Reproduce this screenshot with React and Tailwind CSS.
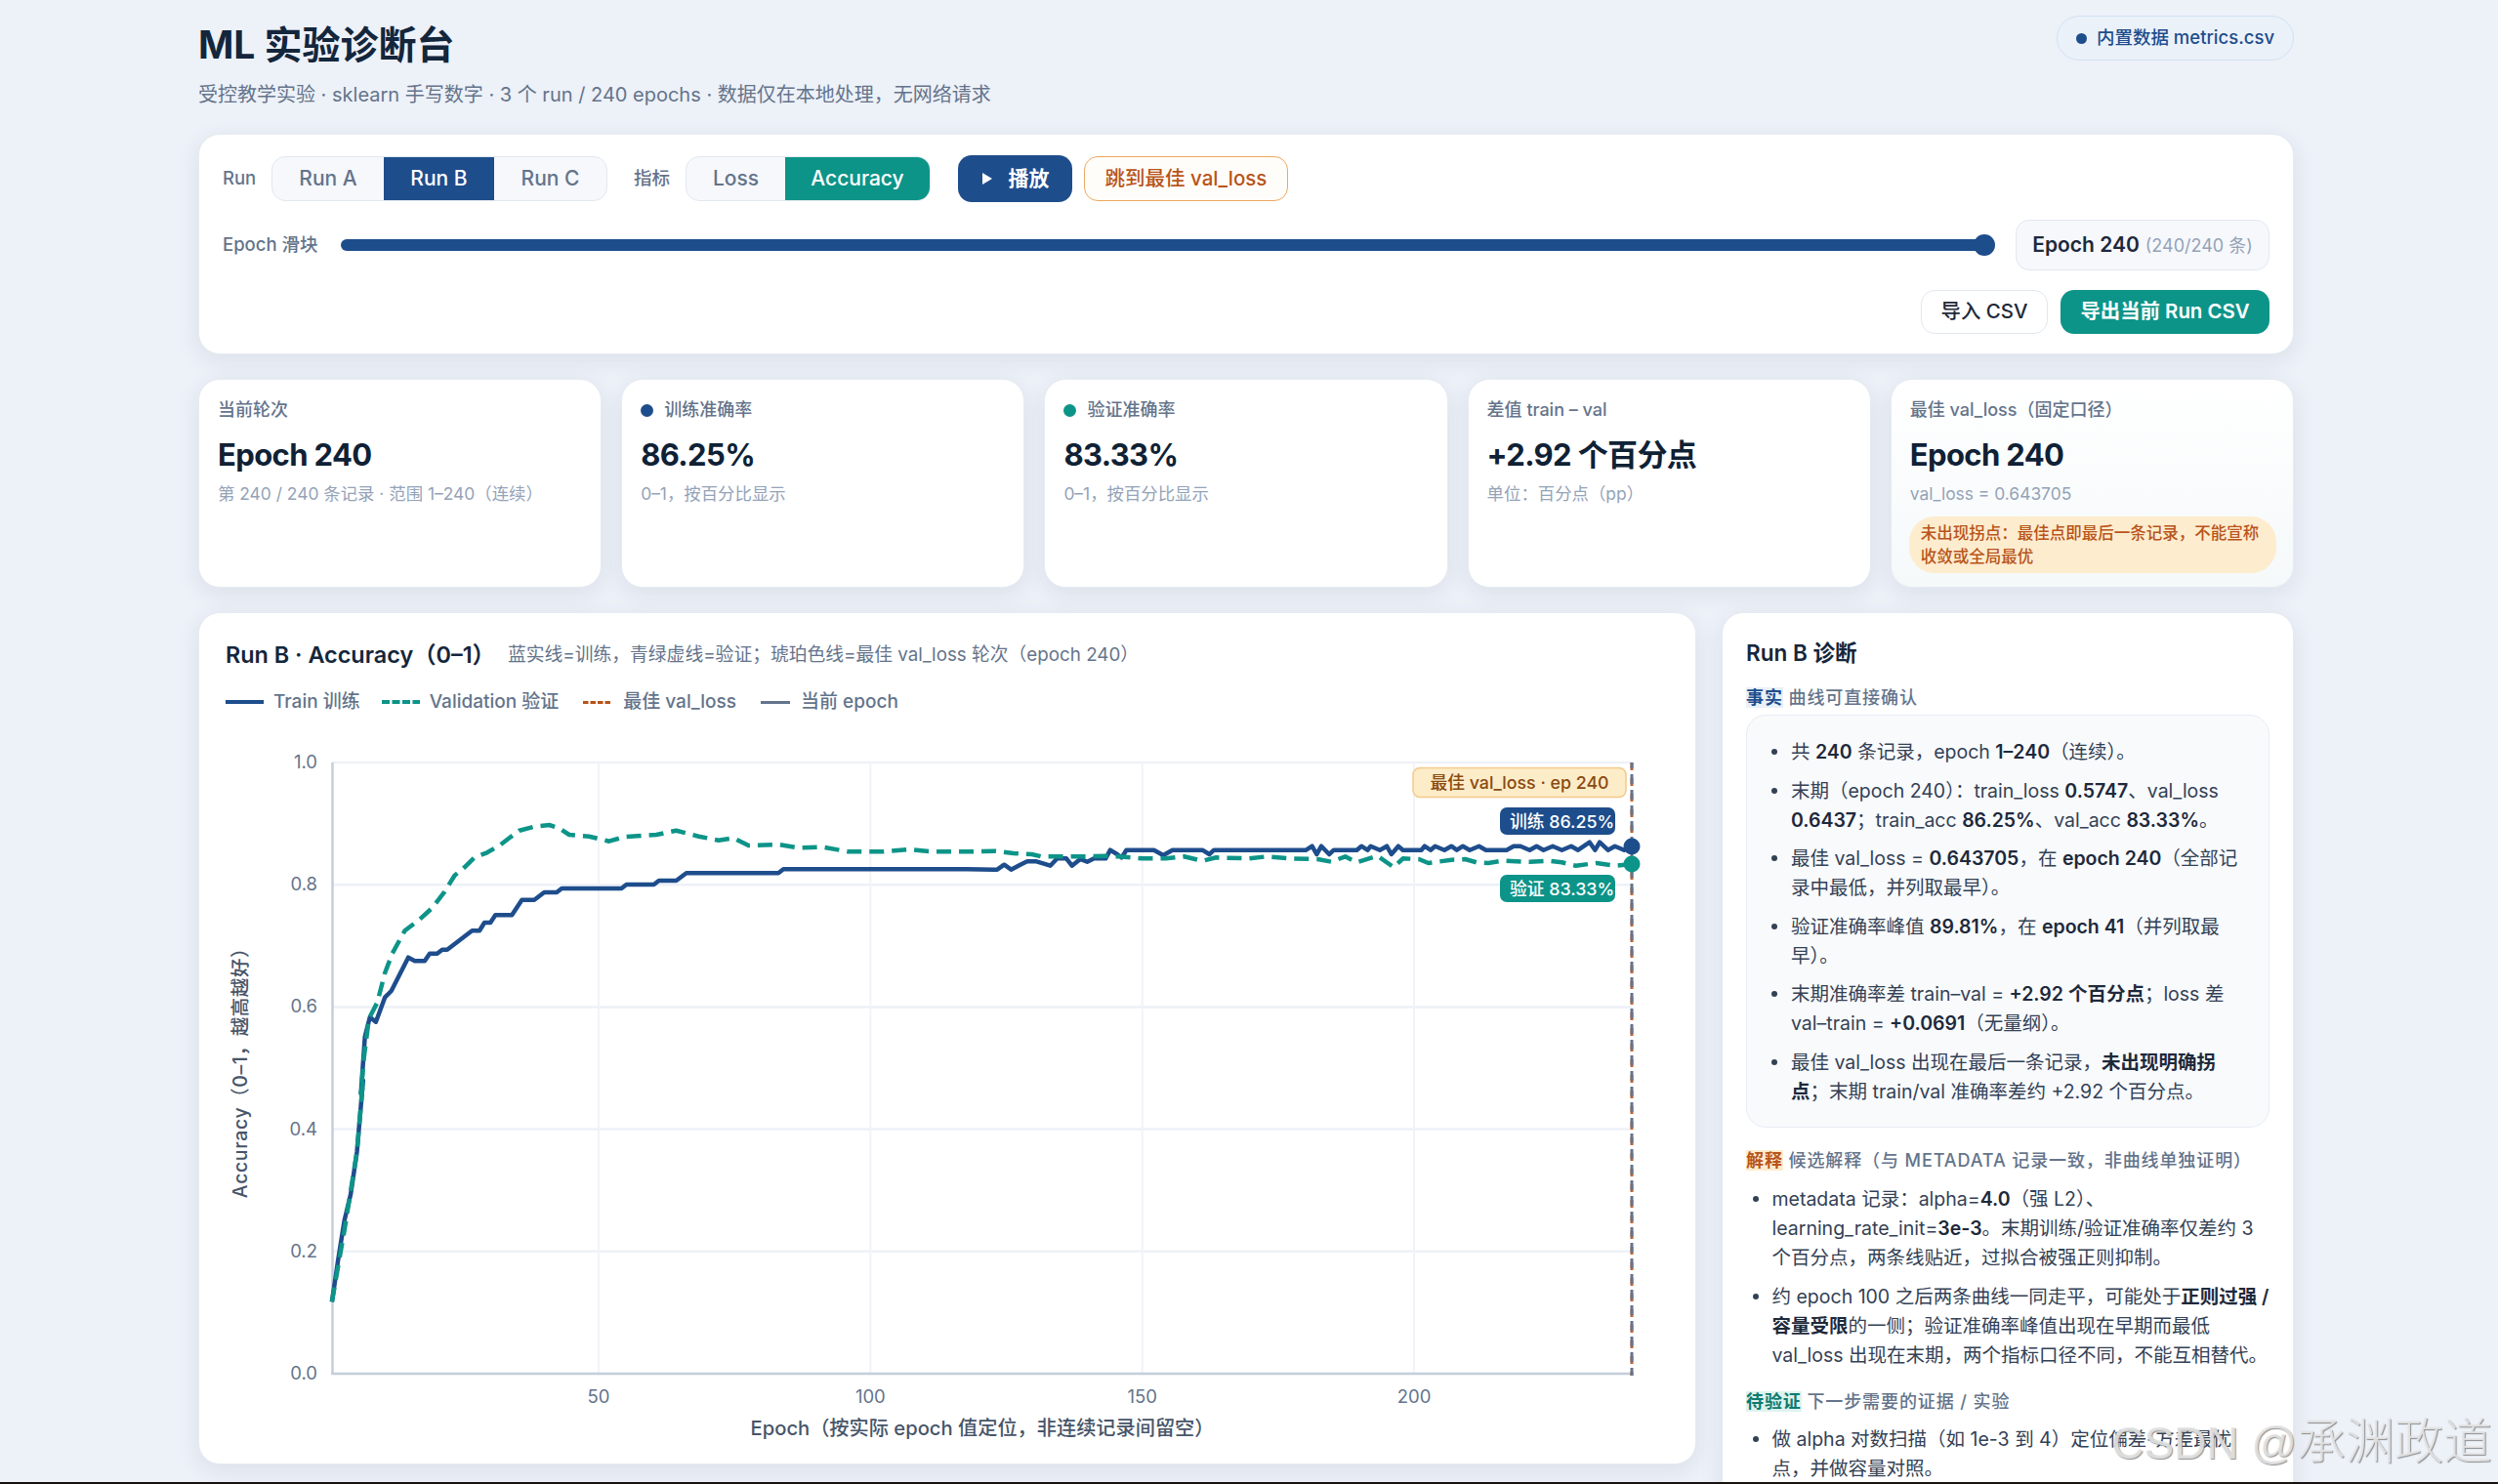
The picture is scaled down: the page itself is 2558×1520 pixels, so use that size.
const FONT = "font-['Inter','Noto_Sans_CJK_SC',sans-serif]";

const z3 = (p) => p.map(([x, y]) => [190 + x * 0.5102, 620 + y / 3]);
const z4 = (p) => p.map(([x, y]) => [1000 + x * 0.472, 740 + y / 3]);
const z5 = (p) => p.map(([x, y]) => [190 + x * 0.638, 1100 + y / 3]);
const toPts = (p) => p.map(([x, y]) => `${x.toFixed(1)},${y.toFixed(1)}`).join(' ');

const trainPts = toPts([
  ...z5([[235, 700], [245, 570], [255, 450], [265, 370], [275, 240], [285, 20]]),
  ...z3([[352, 1500], [360, 1325], [370, 1265], [382, 1280], [400, 1205], [413, 1185], [447, 1082], [460, 1093], [480, 1093], [490, 1070], [505, 1070], [515, 1058], [525, 1058], [575, 1000], [590, 1000], [600, 975], [612, 975], [622, 952], [655, 952], [675, 905], [700, 905], [720, 882], [745, 882], [755, 870], [875, 870], [885, 858], [940, 858], [950, 846], [985, 846], [1005, 823], [1190, 823], [1200, 811], [1568, 811]]),
  ...z4([[45, 452], [60, 437], [75, 452], [95, 437], [110, 427], [130, 427], [160, 440], [175, 418], [195, 418], [207, 440], [225, 420], [240, 428], [255, 418], [280, 418], [290, 392], [305, 405], [315, 415], [325, 392], [385, 392], [405, 408], [425, 392], [490, 392], [505, 405], [515, 392], [715, 392], [728, 380], [738, 405], [748, 380], [765, 405], [775, 392], [825, 392], [835, 380], [848, 392], [855, 380], [875, 392], [890, 380], [900, 405], [915, 380], [925, 392], [965, 392], [972, 380], [985, 392], [995, 380], [1015, 392], [1030, 380], [1042, 392], [1055, 380], [1070, 392], [1090, 380], [1105, 392], [1150, 392], [1165, 380], [1180, 380], [1200, 392], [1215, 380], [1230, 392], [1250, 380], [1270, 392], [1290, 380], [1305, 392], [1330, 368], [1342, 392], [1352, 368], [1370, 392], [1385, 380], [1405, 392], [1422, 380]]),
]);

const valPts = toPts([
  ...z5([[235, 700], [245, 590], [255, 480], [265, 360], [275, 240], [285, 20]]),
  ...z3([[352, 1500], [358, 1390], [368, 1270], [385, 1220], [400, 1130], [415, 1070], [440, 1000], [470, 965], [495, 930], [520, 880], [540, 830], [560, 805], [580, 775], [605, 760], [630, 738], [650, 715], [670, 692], [700, 680], [730, 675], [750, 685], [770, 705], [810, 710], [850, 725], [880, 712], [945, 705], [985, 692], [1030, 710], [1070, 722], [1100, 715], [1130, 738], [1190, 735], [1230, 745], [1280, 743], [1330, 757], [1400, 757], [1450, 750], [1500, 757], [1568, 757]]),
  ...z4([[40, 395], [80, 402], [120, 405], [140, 412], [180, 412], [240, 412], [280, 410], [310, 412], [360, 418], [410, 418], [450, 412], [490, 425], [520, 415], [590, 418], [630, 412], [680, 418], [740, 420], [770, 428], [800, 412], [825, 430], [870, 410], [905, 445], [925, 418], [960, 420], [980, 432], [1030, 422], [1060, 420], [1085, 430], [1110, 432], [1140, 425], [1200, 428], [1240, 425], [1270, 430], [1300, 440], [1345, 432], [1385, 440], [1422, 435]]),
]);

const Y = [1, 0.8, 0.6, 0.4, 0.2, 0].map((v) => ({ v, y: 1407 - v * 626 }));
const X = [50, 100, 150, 200].map((v) => ({ v, x: 613 + (v - 50) * 5.567 }));

function Chart() {
  return (
    <svg viewBox="204 740 1532 759" className="block w-[1532px] h-[759px]">
      {Y.map(({ v, y }) => (
        <g key={v}>
          <line x1="340" x2="1671" y1={y} y2={y} stroke="#eef1f7" strokeWidth="2.5" />
          <text x="325" y={y + 6} textAnchor="end" fontSize="18.5" fill="#64748b">{v.toFixed(1)}</text>
        </g>
      ))}
      {X.map(({ v, x }) => (
        <g key={v}>
          <line x1={x} x2={x} y1="781" y2="1407" stroke="#f1f3f8" strokeWidth="2" />
          <text x={x} y="1437" textAnchor="middle" fontSize="18.5" fill="#64748b">{v}</text>
        </g>
      ))}
      <line x1="340.5" x2="340.5" y1="781" y2="1408" stroke="#c5cedb" strokeWidth="2.5" />
      <line x1="339" x2="1671" y1="1407" y2="1407" stroke="#c5cedb" strokeWidth="2.5" />
      <line x1="1671" x2="1671" y1="781" y2="1409" stroke="#c2622a" strokeWidth="3" strokeDasharray="8 8" />
      <line x1="1671" x2="1671" y1="781" y2="1409" stroke="#64748b" strokeWidth="3" strokeDasharray="10 6" strokeDashoffset="4" />
      <polyline points={trainPts} fill="none" stroke="#1e4d8c" strokeWidth="4.5" strokeLinejoin="round" />
      <polyline points={valPts} fill="none" stroke="#0d9488" strokeWidth="4.5" strokeDasharray="15 8" strokeLinejoin="round" />
      <circle cx="1671" cy="867" r="8.5" fill="#1e4d8c" />
      <circle cx="1671" cy="885" r="8.5" fill="#0d9488" />
      <rect x="1447" y="786.5" width="218" height="30" rx="7" fill="#fdecc8" stroke="#f3c98a" strokeWidth="1.5" />
      <text x="1556" y="807.5" textAnchor="middle" fontSize="17.8" fontWeight="500" fill="#8a4a10">最佳 val_loss · ep 240</text>
      <rect x="1536" y="827" width="118" height="28" rx="7" fill="#1e4d8c" />
      <text x="1546" y="847.5" fontSize="17.8" fontWeight="500" fill="#ffffff">训练 86.25%</text>
      <rect x="1536" y="896" width="118" height="28" rx="7" fill="#0d9488" />
      <text x="1546" y="916.5" fontSize="17.8" fontWeight="500" fill="#ffffff">验证 83.33%</text>
      <text transform="translate(253 1094) rotate(-90)" textAnchor="middle" fontSize="19.5" letterSpacing="0.6" fontWeight="500" fill="#475569">Accuracy（0–1，越高越好）</text>
      <text x="1006" y="1470" textAnchor="middle" fontSize="20.2" fontWeight="500" fill="#475569">Epoch（按实际 epoch 值定位，非连续记录间留空）</text>
    </svg>
  );
}

const SHADOW = 'shadow-[0_6px_24px_rgba(30,50,90,0.09)]';

function Stat({ label, dot, value, sub, children, last }) {
  return (
    <div className={`h-[214px] rounded-[22px] border border-[#e6ebf3] px-[19px] pt-[20px] ${SHADOW} ${last ? 'bg-gradient-to-b from-white to-[#f5f9fa]' : 'bg-white'}`}>
      <div className="flex items-center gap-[11px] text-[18px] leading-[22px] font-medium text-[#64748b]">
        {dot && <span className={`h-[13px] w-[13px] rounded-full ${dot}`} />}
        {label}
      </div>
      <div className="mt-[12px] text-[31px] leading-[46px] font-bold text-[#0f2135] tracking-[-0.02em]">{value}</div>
      <div className="mt-[5px] text-[17.4px] leading-[24px] text-[#94a3b8]">{sub}</div>
      {children}
    </div>
  );
}

function Head({ tag, tagCls, children }) {
  return (
    <div className="text-[18px] leading-[24px] font-medium tracking-[0.05em] text-[#64748b]">
      <span className={`font-semibold ${tagCls}`}>{tag}</span> {children}
    </div>
  );
}

const B = ({ children }) => <b className="font-semibold text-[#1e293b]">{children}</b>;

function Li({ children }) {
  return (
    <li className="relative pl-[20px] before:absolute before:left-0 before:top-[12px] before:h-[6px] before:w-[6px] before:rounded-full before:bg-[#334155] before:content-['']">
      {children}
    </li>
  );
}

export default function App() {
  return (
    <div className={`relative h-[1520px] w-full overflow-hidden bg-[#edf1f8] ${FONT}`}>
      <div className="ml-[203px] w-[2146px] pt-[15px]">
        <header className="flex h-[122px] items-start justify-between">
          <div className="pt-[8px]">
            <h1 className="text-[39px] leading-[46px] font-bold text-[#14263c]">ML 实验诊断台</h1>
            <p className="mt-[14px] text-[20px] leading-[28px] text-[#64748b]">受控教学实验 · sklearn 手写数字 · 3 个 run / 240 epochs · 数据仅在本地处理，无网络请求</p>
          </div>
          <div className="mt-[1px] flex h-[46px] w-[243px] items-center justify-center gap-[10px] rounded-full border border-[#d3e2f2] bg-[#ebf1f9] text-[18.5px] font-medium text-[#1e4d8c]">
            <span className="h-[11px] w-[11px] rounded-full bg-[#1e4d8c]" />
            内置数据 metrics.csv
          </div>
        </header>

        <section className={`h-[226px] rounded-[22px] border border-[#e6ebf3] bg-white px-[24px] pt-[21px] ${SHADOW}`}>
          <div className="flex h-[48px] items-center text-[21px]">
            <span className="w-[50px] text-[18.5px] font-medium text-[#64748b]">Run</span>
            <div className="flex h-[46px] overflow-hidden rounded-[14px] border border-[#e2e8f0] bg-[#f6f8fc] font-medium text-[#64748b]">
              <span className="flex w-[114px] items-center justify-center">Run A</span>
              <span className="flex w-[113px] items-center justify-center bg-[#1e4d8c] text-white">Run B</span>
              <span className="flex w-[115px] items-center justify-center">Run C</span>
            </div>
            <span className="ml-[27px] w-[53px] text-[18.5px] font-medium text-[#64748b]">指标</span>
            <div className="flex h-[46px] overflow-hidden rounded-[14px] border border-[#e2e8f0] bg-[#f6f8fc] font-medium text-[#64748b]">
              <span className="flex w-[101px] items-center justify-center">Loss</span>
              <span className="flex w-[148px] items-center justify-center bg-[#0d9488] text-white">Accuracy</span>
            </div>
            <button className="ml-[28px] flex h-[48px] w-[117px] items-center justify-center gap-[16px] rounded-[14px] bg-[#1e4d8c] font-semibold text-white">
              <svg width="12" height="14" viewBox="0 0 12 14"><path d="M1 1l10 6-10 6z" fill="#fff" /></svg>
              播放
            </button>
            <button className="ml-[12px] flex h-[46px] w-[209px] items-center justify-center rounded-[14px] border border-[#eea860] bg-[#fffdf9] text-[20.5px] font-medium text-[#b8541a]">跳到最佳 val_loss</button>
          </div>
          <div className="mt-[18px] flex h-[52px] items-center">
            <span className="w-[121px] text-[18.5px] font-medium text-[#64748b]">Epoch 滑块</span>
            <div className="relative h-[12px] w-[1683px] rounded-full bg-[#1e4d8c]">
              <span className="absolute right-[-11px] top-[-5px] h-[22px] w-[22px] rounded-full bg-[#1e4d8c]" />
            </div>
            <div className="ml-auto flex h-[52px] w-[260px] items-center justify-center gap-[6px] rounded-[14px] border border-[#e2e8f0] bg-[#f6f8fc] text-[21px] font-semibold text-[#1e293b]">
              Epoch 240 <span className="text-[18px] font-normal text-[#94a3b8]">(240/240 条)</span>
            </div>
          </div>
          <div className="mt-[20px] flex justify-end gap-[13px] text-[20.4px]">
            <button className="h-[45px] w-[130px] rounded-[14px] border border-[#e2e8f0] bg-white font-medium text-[#1e293b]">导入 CSV</button>
            <button className="h-[45px] w-[214px] rounded-[14px] bg-[#0d9488] font-semibold text-white">导出当前 Run CSV</button>
          </div>
        </section>

        <div className="mt-[25px] grid grid-cols-5 gap-[20px]">
          <Stat label="当前轮次" value="Epoch 240" sub="第 240 / 240 条记录 · 范围 1–240（连续）" />
          <Stat label="训练准确率" dot="bg-[#1e4d8c]" value="86.25%" sub="0–1，按百分比显示" />
          <Stat label="验证准确率" dot="bg-[#0d9488]" value="83.33%" sub="0–1，按百分比显示" />
          <Stat label="差值 train – val" value="+2.92 个百分点" sub="单位：百分点（pp）" />
          <Stat last label="最佳 val_loss（固定口径）" value="Epoch 240" sub="val_loss = 0.643705">
            <div className="mt-[11px] -mr-[2px] -ml-[1px] rounded-[26px] bg-[#fdecce] px-[12px] pt-[5px] pb-[5px] text-[16.5px] leading-[24px] font-medium text-[#b8541a]">未出现拐点：最佳点即最后一条记录，不能宣称收敛或全局最优</div>
          </Stat>
        </div>

        <div className="mt-[25px] flex items-start gap-[26px]">
          <section className={`h-[873px] w-[1534px] rounded-[22px] border border-[#e6ebf3] bg-white ${SHADOW}`}>
            <div className="px-[27px] pt-[26px]">
              <div className="flex h-[34px] items-center gap-[13px]">
                <span className="text-[23.4px] font-semibold text-[#14263c]">Run B · Accuracy（0–1）</span>
                <span className="text-[18.8px] text-[#64748b]">蓝实线=训练，青绿虚线=验证；琥珀色线=最佳 val_loss 轮次（epoch 240）</span>
              </div>
              <div className="mt-[19px] flex h-[24px] items-center text-[19px] font-medium text-[#64748b]">
                <span className="h-[4px] w-[39px] bg-[#1e4d8c]" />
                <span className="ml-[10px]">Train 训练</span>
                <svg className="ml-[22px]" width="39" height="4"><line x1="0" x2="39" y1="2" y2="2" stroke="#0d9488" strokeWidth="4" strokeDasharray="8 2.5" /></svg>
                <span className="ml-[10px]">Validation 验证</span>
                <svg className="ml-[25px]" width="30" height="3"><line x1="0" x2="30" y1="1.5" y2="1.5" stroke="#b8541a" strokeWidth="3" strokeDasharray="5.5 2" /></svg>
                <span className="ml-[11px]">最佳 val_loss</span>
                <span className="ml-[25px] h-[3px] w-[30px] bg-[#64748b]" />
                <span className="ml-[11px]">当前 epoch</span>
              </div>
            </div>
            <div className="mt-[9px]"><Chart /></div>
          </section>

          <aside className={`h-[1000px] w-[586px] shrink-0 rounded-[22px] border border-[#e6ebf3] bg-white px-[24px] pt-[26px] ${SHADOW}`}>
            <h2 className="text-[22.5px] leading-[30px] font-semibold text-[#14263c]">Run B 诊断</h2>
            <div className="mt-[19px]"><Head tag="事实" tagCls="bg-[#e8f0f8] text-[#1e4d8c]">曲线可直接确认</Head></div>
            <ul className="mt-[5px] flex h-[423px] flex-col gap-[9.5px] rounded-[20px] border border-[#e8edf4] bg-[#f8fafc] pl-[25px] pr-[22px] pt-[22px] text-[19.5px] leading-[30px] text-[#334155]">
              <Li>共 <B>240</B> 条记录，epoch <B>1–240</B>（连续）。</Li>
              <Li>末期（epoch 240）：train_loss <B>0.5747</B>、val_loss <B>0.6437</B>；train_acc <B>86.25%</B>、val_acc <B>83.33%</B>。</Li>
              <Li>最佳 val_loss = <B>0.643705</B>，在 <B>epoch 240</B>（全部记录中最低，并列取最早）。</Li>
              <Li>验证准确率峰值 <B>89.81%</B>，在 <B>epoch 41</B>（并列取最早）。</Li>
              <Li>末期准确率差 train–val = <B>+2.92 个百分点</B>；loss 差 val–train = <B>+0.0691</B>（无量纲）。</Li>
              <Li>最佳 val_loss 出现在最后一条记录，<B>未出现明确拐点</B>；末期 train/val 准确率差约 +2.92 个百分点。</Li>
            </ul>
            <div className="mt-[22px]"><Head tag="解释" tagCls="bg-[#fdecce] text-[#b8541a]">候选解释（与 METADATA 记录一致，非曲线单独证明）</Head></div>
            <ul className="mt-[12px] flex flex-col gap-[10px] pl-[6.5px] text-[19.5px] leading-[30px] text-[#334155]">
              <Li>metadata 记录：alpha=<B>4.0</B>（强 L2）、learning_rate_init=<B>3e-3</B>。末期训练/验证准确率仅差约 3 个百分点，两条线贴近，过拟合被强正则抑制。</Li>
              <Li>约 epoch 100 之后两条曲线一同走平，可能处于<B>正则过强 / 容量受限</B>的一侧；验证准确率峰值出现在早期而最低 val_loss 出现在末期，两个指标口径不同，不能互相替代。</Li>
            </ul>
            <div className="mt-[21px]"><Head tag="待验证" tagCls="bg-[#def3ee] text-[#0d7a70]">下一步需要的证据 / 实验</Head></div>
            <ul className="mt-[11px] flex flex-col gap-[10px] pl-[6.5px] text-[19.5px] leading-[30px] text-[#334155]">
              <Li>做 alpha 对数扫描（如 1e-3 到 4）定位偏差-方差最优点，并做容量对照。</Li>
            </ul>
          </aside>
        </div>
      </div>
      <div className="absolute right-[6px] bottom-[12px] flex items-baseline leading-[60px] font-light text-[#e6e6e6]/90 [text-shadow:1px_1px_1px_rgba(110,110,110,0.75)] font-['Liberation_Sans','Noto_Sans_CJK_SC',sans-serif]">
        <span className="text-[46px] whitespace-pre">CSDN @</span>
        <span className="text-[50px]">承渊政道</span>
      </div>
      <div className="absolute bottom-0 left-0 h-[2px] w-full bg-[#17120e]" />
    </div>
  );
}
